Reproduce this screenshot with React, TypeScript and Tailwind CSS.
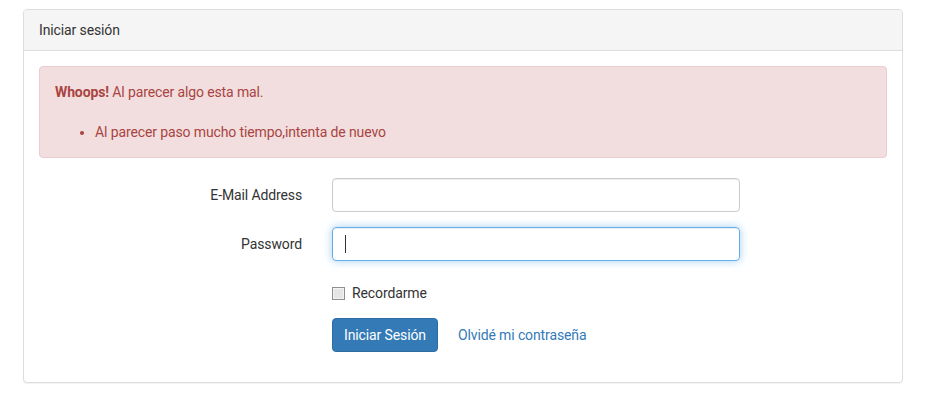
export default function App() {
  return (
    <div className="min-h-screen bg-white pt-[9px] font-['Roboto',sans-serif] text-[14px] leading-[20px] tracking-[-0.12px] text-[#333]">
      <div className="ml-[23px] w-[880px] rounded-[4px] border border-[#ddd] bg-white shadow-[0_1px_1px_rgba(0,0,0,0.05)]">
        {/* Heading */}
        <div className="rounded-t-[3px] border-b border-[#ddd] bg-[#f5f5f5] px-[15px] py-[10px]">
          Iniciar sesión
        </div>

        {/* Body */}
        <div className="p-[15px]">
          <div className="mb-[20px] rounded-[4px] border border-[#ebccd1] bg-[#f2dede] p-[15px] text-[#a94442]">
            <div>
              <strong className="font-bold">Whoops!</strong> Al parecer algo esta mal.
            </div>
            <div className="h-[20px]" />
            <ul className="list-disc pl-[40px]">
              <li>Al parecer paso mucho tiempo,intenta de nuevo</li>
            </ul>
          </div>

          <form className="flex flex-col gap-[15px] pb-[15px]" onSubmit={(e) => e.preventDefault()}>
            <div className="flex items-start">
              <label className="w-[263px] pt-[7px] text-right">E-Mail Address</label>
              <input
                type="email"
                className="ml-[30px] h-[34px] w-[408px] rounded-[4px] border border-[#ccc] px-[12px] py-[6px] shadow-[inset_0_1px_1px_rgba(0,0,0,0.075)] outline-none"
              />
            </div>

            <div className="flex items-start">
              <label className="w-[263px] pt-[7px] text-right">Password</label>
              <div className="relative ml-[30px]">
                <input
                  type="password"
                  className="h-[34px] w-[408px] rounded-[4px] border border-[#66afe9] px-[12px] py-[6px] shadow-[inset_0_1px_1px_rgba(0,0,0,0.075),0_0_8px_rgba(102,175,233,0.6)] outline-none"
                />
                {/* text caret */}
                <span className="absolute left-[13px] top-[8px] h-[18px] w-px bg-[#333]" />
              </div>
            </div>

            <div className="flex">
              <div className="ml-[293px] flex items-center pt-[7px]">
                <input
                  type="checkbox"
                  className="m-0 h-[13px] w-[13px] appearance-none border border-[#8f8f8f] bg-[#e6e6e6] shadow-[inset_0_0_0_1px_#f4f4f4]"
                />
                <span className="ml-[7px]">Recordarme</span>
              </div>
            </div>

            <div className="flex items-center">
              <button
                type="submit"
                className="ml-[293px] h-[34px] rounded-[4px] border border-[#2e6da4] bg-[#337ab7] px-[11px] text-white"
              >
                Iniciar Sesión
              </button>
              <a href="#" className="ml-[20px] text-[#337ab7]">
                Olvidé mi contraseña
              </a>
            </div>
          </form>
        </div>
      </div>
    </div>
  );
}
